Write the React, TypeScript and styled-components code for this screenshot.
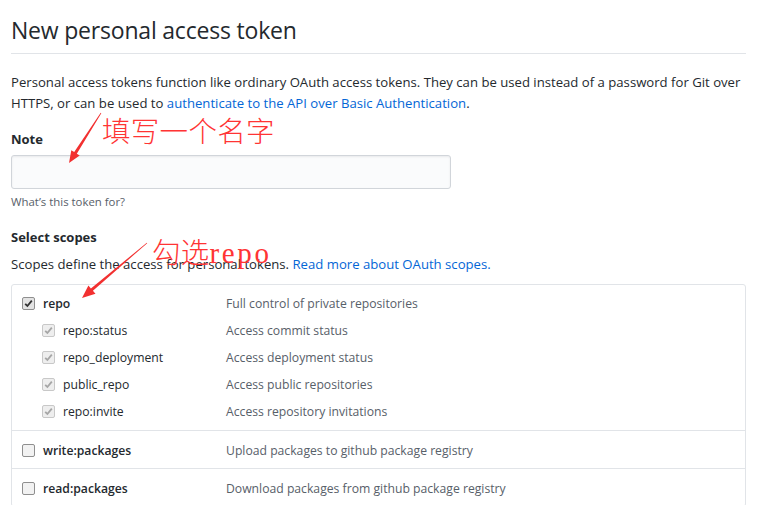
import React from "react";
import styled, { createGlobalStyle } from "styled-components";

const Global = createGlobalStyle`
  html, body { margin: 0; padding: 0; background: #fff; }
  body { font-family: "Open Sans", "Noto Sans", sans-serif; color: #24292e; overflow: hidden; }
`;

const Page = styled.div`
  position: relative;
  width: 762px;
  height: 505px;
  overflow: hidden;
`;

const Content = styled.div`
  width: 735px;
  padding: 15px 0 0 11px;
`;

const Title = styled.h1`
  margin: 0;
  font-size: 23px;
  letter-spacing: -0.2px;
  font-weight: 400;
  line-height: 30px;
  padding-bottom: 8px;
  border-bottom: 1px solid #e1e4e8;
`;

const Lead = styled.p`
  margin: 18px 0 0;
  font-size: 13.15px;
  line-height: 21px;
`;

const Link = styled.a`
  color: #0366d6;
  text-decoration: none;
`;

const Label = styled.div<{ $gap: number }>`
  margin-top: ${(p) => p.$gap}px;
  font-size: 13px;
  font-weight: 700;
  line-height: 21px;
`;

const Input = styled.div`
  margin-top: 5px;
  width: 438px;
  height: 32px;
  background: #fafbfc;
  border: 1px solid #d1d5da;
  border-radius: 3px;
  box-shadow: inset 0 1px 2px rgba(27, 31, 35, 0.075);
`;

const Hint = styled.div`
  margin-top: 4px;
  font-size: 11.4px;
  line-height: 18px;
  color: #586069;
`;

const Text = styled.div`
  margin-top: 6px;
  font-size: 13.15px;
  line-height: 21px;
`;

const Table = styled.div`
  margin-top: 9px;
  border: 1px solid #e1e4e8;
  border-radius: 3px;
`;

const Group = styled.div`
  padding: 8px 10px;
  display: flex;
  flex-direction: column;
  gap: 6px;
  & + & {
    padding: 9px 10px 7px;
    border-top: 1px solid #e1e4e8;
  }
`;

const Line = styled.div`
  display: grid;
  grid-template-columns: 204px 1fr;
  align-items: center;
  height: 21px;
  font-size: 12.2px;
`;

const Name = styled.div<{ $sub?: boolean }>`
  display: flex;
  align-items: center;
  gap: 8px;
  padding-left: ${(p) => (p.$sub ? 20 : 0)}px;
  font-weight: ${(p) => (p.$sub ? 400 : 600)};
  color: #24292e;
`;

const Desc = styled.div`
  color: #586069;
`;

const Box = styled.span<{ $state: "on" | "sub" | "off" }>`
  width: 11px;
  height: 11px;
  flex: none;
  border-radius: 2px;
  border: 1px solid ${(p) => (p.$state === "sub" ? "#c8c8c8" : "#8f8f8f")};
  background: ${(p) => (p.$state === "sub" ? "#eeeeee" : p.$state === "on" ? "#e3e3e3" : "#f2f2f2")};
  display: flex;
  align-items: center;
  justify-content: center;
`;

const Overlay = styled.svg`
  position: absolute;
  left: 0;
  top: 0;
  pointer-events: none;
`;

const Note = styled.div<{ $x: number; $y: number }>`
  position: absolute;
  left: ${(p) => p.$x}px;
  top: ${(p) => p.$y}px;
  color: #ff3434;
  font-family: "Noto Sans CJK SC", sans-serif;
  font-weight: 300;
  font-size: 28.5px;
  letter-spacing: 0.3px;
  line-height: 34px;
  white-space: nowrap;
`;

const Latin = styled.span`
  font-family: "Liberation Serif", serif;
  font-weight: 400;
  font-size: 29px;
  letter-spacing: 2.6px;
`;

const Check = ({ color }: { color: string }) => (
  <svg width="9" height="9" viewBox="0 0 9 9">
    <path d="M1.2 4.8 L3.4 7 L7.8 1.6" fill="none" stroke={color} strokeWidth="1.8" />
  </svg>
);

const CheckBox = ({ state }: { state: "on" | "sub" | "off" }) => (
  <Box $state={state}>
    {state === "on" && <Check color="#333" />}
    {state === "sub" && <Check color="#a6a6a6" />}
  </Box>
);

const subs = [
  ["repo:status", "Access commit status"],
  ["repo_deployment", "Access deployment status"],
  ["public_repo", "Access public repositories"],
  ["repo:invite", "Access repository invitations"],
];

export default function App() {
  return (
    <Page>
      <Global />
      <Content>
        <Title>New personal access token</Title>
        <Lead>
          Personal access tokens function like ordinary OAuth access tokens. They can be used instead of a password for Git over
          HTTPS, or can be used to <Link>authenticate to the API over Basic Authentication</Link>.
        </Lead>
        <Label $gap={15}>Note</Label>
        <Input />
        <Hint>What’s this token for?</Hint>
        <Label $gap={16}>Select scopes</Label>
        <Text>
          Scopes define the access for personal tokens. <Link>Read more about OAuth scopes.</Link>
        </Text>
        <Table>
          <Group>
            <Line>
              <Name>
                <CheckBox state="on" />
                repo
              </Name>
              <Desc>Full control of private repositories</Desc>
            </Line>
            {subs.map(([n, d]) => (
              <Line key={n}>
                <Name $sub>
                  <CheckBox state="sub" />
                  {n}
                </Name>
                <Desc>{d}</Desc>
              </Line>
            ))}
          </Group>
          <Group>
            <Line>
              <Name>
                <CheckBox state="off" />
                write:packages
              </Name>
              <Desc>Upload packages to github package registry</Desc>
            </Line>
          </Group>
          <Group>
            <Line>
              <Name>
                <CheckBox state="off" />
                read:packages
              </Name>
              <Desc>Download packages from github package registry</Desc>
            </Line>
          </Group>
        </Table>
      </Content>
      <Overlay width="762" height="505" viewBox="0 0 762 505">
        <polygon
          fill="#f23030"
          points="101.3,113.2 76.8,153.7 79.7,155.6 69,163 71.3,150.2 74.2,152.1 100.7,112.8"
        />
        <polygon
          fill="#f23030"
          points="147.2,243.2 92.9,290.7 95.5,293.8 82,298 88.4,285.4 90.9,288.5 146.8,242.8"
        />
      </Overlay>
      <Note $x={102} $y={113}>填写一个名字</Note>
      <Note $x={152} $y={234}>
        勾选<Latin>repo</Latin>
      </Note>
    </Page>
  );
}
